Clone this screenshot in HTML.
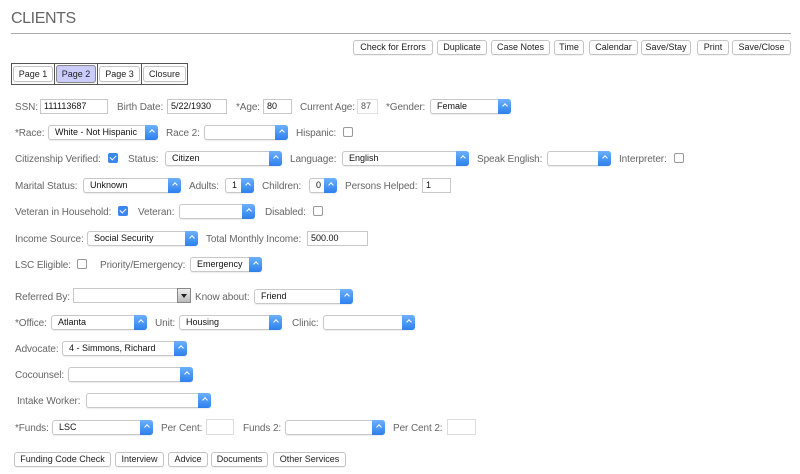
<!DOCTYPE html>
<html><head><meta charset="utf-8"><style>
body{margin:0;width:800px;height:474px;background:#fff;position:relative;overflow:hidden;font-family:"Liberation Sans",sans-serif}
.a{position:absolute}
.l{position:absolute;font-size:10px;letter-spacing:-0.1px;color:#666;line-height:14px;white-space:nowrap;margin-top:2px}
.i{position:absolute;height:14px;border:1px solid #c8c8c8;box-sizing:border-box;font-size:9px;color:#111;line-height:13px;padding-left:3px;background:#fff}
.s{position:absolute;height:15px;border:1px solid #c8c8c8;border-radius:3px;box-sizing:border-box;font-size:9px;color:#111;line-height:13px;padding-left:6px;background:#fff;box-shadow:0 1px 1px rgba(0,0,0,.08)}
.s:after{content:"";position:absolute;right:-1px;top:-1px;width:13px;height:15px;border-radius:0 3px 3px 0;background:linear-gradient(#6cb0ff,#2d80ec)}
.s:before{content:"";position:absolute;right:3px;top:4px;width:3px;height:3px;border:solid #fff;border-width:1px 0 0 1px;transform:rotate(45deg);z-index:2;box-shadow:3px 3px 0 -0px transparent}
.c{position:absolute;width:10px;height:10px;border:1px solid #999;border-radius:2px;box-sizing:border-box;background:#fff}
.k{position:absolute;width:10px;height:10px;border-radius:2px;background:#3b86f0}
.k:after{content:"";position:absolute;left:3px;top:1px;width:3px;height:5px;border:solid #fff;border-width:0 1.5px 1.5px 0;transform:rotate(45deg)}
.b{position:absolute;height:15px;border:1px solid #c4c4c4;border-radius:3px;box-sizing:border-box;font-size:9px;color:#222;line-height:13px;text-align:center;background:#fff;box-shadow:0 1px 1px rgba(0,0,0,.06);white-space:nowrap}
</style></head><body>
<div class="a" style="left:11px;top:10px;font-size:16px;letter-spacing:-0.4px;color:#666;">CLIENTS</div>
<div class="a" style="left:11px;top:33px;width:780px;height:1px;background:#aaa"></div>

<div class="b" style="left:353px;top:40px;width:80px">Check for Errors</div>
<div class="b" style="left:437px;top:40px;width:50px">Duplicate</div>
<div class="b" style="left:491px;top:40px;width:59px">Case Notes</div>
<div class="b" style="left:554px;top:40px;width:30px">Time</div>
<div class="b" style="left:589px;top:40px;width:49px">Calendar</div>
<div class="b" style="left:641px;top:40px;width:50px">Save/Stay</div>
<div class="b" style="left:697px;top:40px;width:32px">Print</div>
<div class="b" style="left:732px;top:40px;width:59px">Save/Close</div>

<div class="a" style="left:11px;top:63px;width:177px;height:22px;border:1px solid #555;box-sizing:border-box;background:#fff"></div>
<div class="a" style="left:54px;top:63px;width:1px;height:22px;background:#555"></div>
<div class="a" style="left:97px;top:63px;width:1px;height:22px;background:#555"></div>
<div class="a" style="left:141px;top:63px;width:1px;height:22px;background:#555"></div>
<div class="b" style="left:13px;top:66px;width:40px;height:16px;line-height:14px">Page 1</div>
<div class="b" style="left:56px;top:65px;width:40px;height:18px;line-height:16px;background:#ccccff;border-color:#888">Page 2</div>
<div class="b" style="left:99px;top:66px;width:41px;height:16px;line-height:14px">Page 3</div>
<div class="b" style="left:143px;top:66px;width:43px;height:16px;line-height:14px">Closure</div>

<div class="l" style="left:15px;top:99px">SSN:</div>
<div class="i" style="left:40px;top:99px;width:68px;height:15px">111113687</div>
<div class="l" style="left:117px;top:99px">Birth Date:</div>
<div class="i" style="left:167px;top:99px;width:60px;height:15px">5/22/1930</div>
<div class="l" style="left:236px;top:99px">*Age:</div>
<div class="i" style="left:263px;top:99px;width:29px;height:15px">80</div>
<div class="l" style="left:300px;top:99px">Current Age:</div>
<div class="i" style="left:357px;top:99px;width:21px;height:15px;color:#555;border-color:#e0e0e0">87</div>
<div class="l" style="left:386px;top:99px">*Gender:</div>
<div class="s" style="left:430px;top:99px;width:81px">Female</div>

<div class="l" style="left:15px;top:125px">*Race:</div>
<div class="s" style="left:48px;top:125px;width:110px">White - Not Hispanic</div>
<div class="l" style="left:166px;top:125px">Race 2:</div>
<div class="s" style="left:204px;top:125px;width:84px"></div>
<div class="l" style="left:296px;top:125px">Hispanic:</div>
<div class="c" style="left:343px;top:127px"></div>

<div class="l" style="left:15px;top:151px">Citizenship Verified:</div>
<div class="k" style="left:108px;top:153px"></div>
<div class="l" style="left:128px;top:151px">Status:</div>
<div class="s" style="left:165px;top:151px;width:117px">Citizen</div>
<div class="l" style="left:290px;top:151px">Language:</div>
<div class="s" style="left:342px;top:151px;width:127px">English</div>
<div class="l" style="left:477px;top:151px">Speak English:</div>
<div class="s" style="left:547px;top:151px;width:64px"></div>
<div class="l" style="left:619px;top:151px">Interpreter:</div>
<div class="c" style="left:674px;top:153px"></div>

<div class="l" style="left:15px;top:178px">Marital Status:</div>
<div class="s" style="left:83px;top:178px;width:98px">Unknown</div>
<div class="l" style="left:189px;top:178px">Adults:</div>
<div class="s" style="left:225px;top:178px;width:29px">1</div>
<div class="l" style="left:262px;top:178px">Children:</div>
<div class="s" style="left:309px;top:178px;width:28px">0</div>
<div class="l" style="left:345px;top:178px">Persons Helped:</div>
<div class="i" style="left:422px;top:178px;width:29px;height:15px">1</div>

<div class="l" style="left:15px;top:204px">Veteran in Household:</div>
<div class="k" style="left:118px;top:206px"></div>
<div class="l" style="left:138px;top:204px">Veteran:</div>
<div class="s" style="left:179px;top:204px;width:76px"></div>
<div class="l" style="left:265px;top:204px">Disabled:</div>
<div class="c" style="left:313px;top:206px"></div>

<div class="l" style="left:15px;top:231px">Income Source:</div>
<div class="s" style="left:87px;top:231px;width:111px">Social Security</div>
<div class="l" style="left:206px;top:231px">Total Monthly Income:</div>
<div class="i" style="left:307px;top:231px;width:61px;height:15px">500.00</div>

<div class="l" style="left:15px;top:257px">LSC Eligible:</div>
<div class="c" style="left:77px;top:259px"></div>
<div class="l" style="left:100px;top:257px">Priority/Emergency:</div>
<div class="s" style="left:190px;top:257px;width:72px">Emergency</div>

<div class="l" style="left:15px;top:289px">Referred By:</div>
<div class="i" style="left:73px;top:288px;width:105px;height:15px"></div>
<div class="a" style="left:177px;top:288px;width:14px;height:15px;background:linear-gradient(#eee,#bbb);border:1px solid #888;box-sizing:border-box"><div style="position:absolute;left:3px;top:5px;border-left:3.5px solid transparent;border-right:3.5px solid transparent;border-top:4px solid #222"></div></div>
<div class="l" style="left:195px;top:289px">Know about:</div>
<div class="s" style="left:254px;top:289px;width:99px">Friend</div>

<div class="l" style="left:15px;top:315px">*Office:</div>
<div class="s" style="left:51px;top:315px;width:96px">Atlanta</div>
<div class="l" style="left:155px;top:315px">Unit:</div>
<div class="s" style="left:179px;top:315px;width:103px">Housing</div>
<div class="l" style="left:292px;top:315px">Clinic:</div>
<div class="s" style="left:323px;top:315px;width:92px"></div>

<div class="l" style="left:15px;top:341px">Advocate:</div>
<div class="s" style="left:62px;top:341px;width:125px">4 - Simmons, Richard</div>
<div class="l" style="left:15px;top:367px">Cocounsel:</div>
<div class="s" style="left:68px;top:367px;width:125px"></div>
<div class="l" style="left:17px;top:393px">Intake Worker:</div>
<div class="s" style="left:86px;top:393px;width:125px"></div>

<div class="l" style="left:15px;top:420px">*Funds:</div>
<div class="s" style="left:52px;top:420px;width:101px">LSC</div>
<div class="l" style="left:161px;top:420px">Per Cent:</div>
<div class="i" style="left:206px;top:419px;width:28px;height:16px;border-color:#ddd"></div>
<div class="l" style="left:243px;top:420px">Funds 2:</div>
<div class="s" style="left:285px;top:420px;width:100px"></div>
<div class="l" style="left:393px;top:420px">Per Cent 2:</div>
<div class="i" style="left:447px;top:419px;width:29px;height:16px;border-color:#ddd"></div>

<div class="b" style="left:14px;top:452px;width:97px">Funding Code Check</div>
<div class="b" style="left:115px;top:452px;width:49px">Interview</div>
<div class="b" style="left:168px;top:452px;width:40px">Advice</div>
<div class="b" style="left:211px;top:452px;width:57px">Documents</div>
<div class="b" style="left:273px;top:452px;width:73px">Other Services</div>
</body></html>
